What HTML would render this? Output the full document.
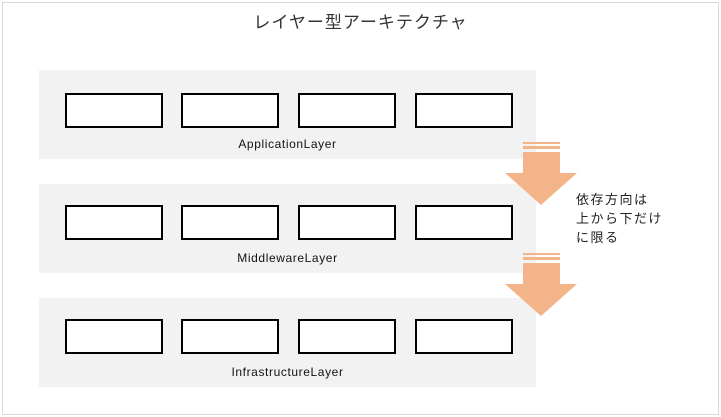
<!DOCTYPE html><html><head><meta charset="utf-8"><style>
body{margin:0;width:721px;height:417px;background:#fff;position:relative;overflow:hidden;font-family:"Liberation Sans","Noto Sans CJK JP",sans-serif}
.frame{position:absolute;left:2px;top:2px;width:715px;height:411px;border:1px solid #d9d9d9}
.title{position:absolute;left:0;width:721px;top:8px;text-align:center;font-size:17px;color:#333;letter-spacing:1px}
.panel{position:absolute;left:39px;width:497px;height:89px;background:#f2f2f2}
.box{position:absolute;width:94px;height:31px;border:2px solid #000;background:#fff;top:22px}
.lbl{position:absolute;left:0;width:497px;top:67px;text-align:center;font-size:12px;color:#111;letter-spacing:0.6px}
.note{position:absolute;left:576px;top:190px;font-size:13px;line-height:19px;color:#222;letter-spacing:1.5px}
</style></head><body>
<div class="frame"></div>
<div class="title">レイヤー型アーキテクチャ</div>
<div class="panel" style="top:70px"><div class="box" style="left:26px;top:23px"></div><div class="box" style="left:142px;top:23px"></div><div class="box" style="left:259px;top:23px"></div><div class="box" style="left:376px;top:23px"></div><div class="lbl">ApplicationLayer</div></div>
<div class="panel" style="top:184px"><div class="box" style="left:26px;top:21px"></div><div class="box" style="left:142px;top:21px"></div><div class="box" style="left:259px;top:21px"></div><div class="box" style="left:376px;top:21px"></div><div class="lbl">MiddlewareLayer</div></div>
<div class="panel" style="top:298px"><div class="box" style="left:26px;top:21px"></div><div class="box" style="left:142px;top:21px"></div><div class="box" style="left:259px;top:21px"></div><div class="box" style="left:376px;top:21px"></div><div class="lbl">InfrastructureLayer</div></div>
<svg style="position:absolute;left:0;top:0" width="721" height="417">
<g fill="#f4b183" opacity="0.95">
<polygon points="523,152 560,152 560,173 577,173 541,205 505,173 523,173"/>
<rect x="523" y="142" width="37" height="2"/><rect x="523" y="146" width="37" height="3"/>
<polygon points="523,263 560,263 560,284 577,284 541,316 505,284 523,284"/>
<rect x="523" y="253" width="37" height="2"/><rect x="523" y="257" width="37" height="3"/>
</g></svg>
<div class="note">依存方向は<br>上から下だけ<br>に限る</div>
</body></html>
